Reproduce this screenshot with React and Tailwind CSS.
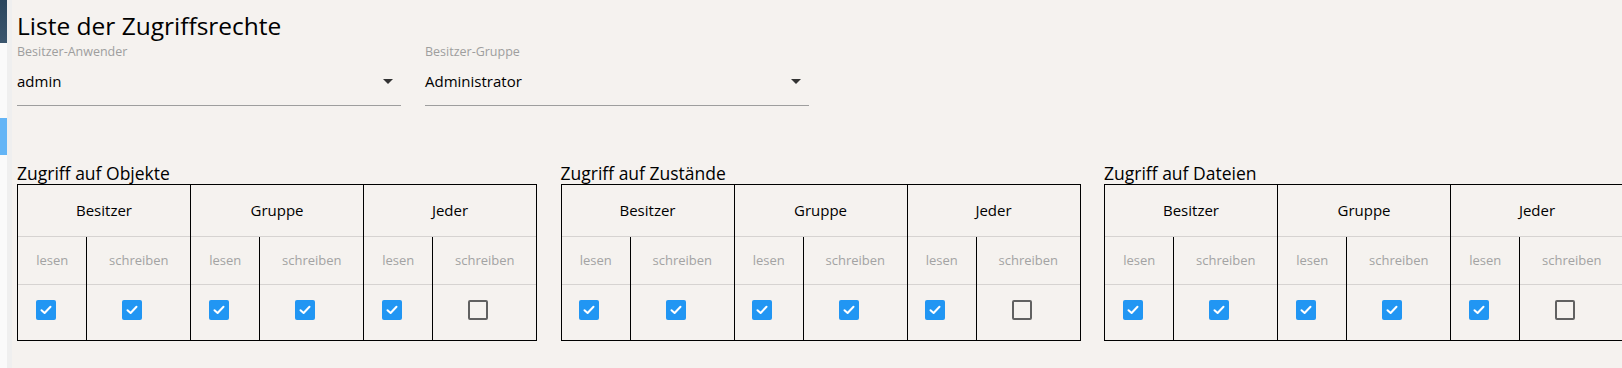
import React from 'react';

const font = { fontFamily: '"Open Sans", "Noto Sans", sans-serif' };

const Checkbox = ({ checked }) => {
  if (!checked) {
    return <span className="block w-[20px] h-[20px] rounded-[2px] border-[2.5px] border-[#616161]" />;
  }
  return (
    <span className="flex items-center justify-center w-[20px] h-[20px] rounded-[2px] bg-[#2196f3]">
      <svg width="14" height="14" viewBox="0 0 14 14">
        <path d="M2.5 7.2 L5.6 10 L11.5 3.8" fill="none" stroke="white" strokeWidth="2" strokeLinecap="round" strokeLinejoin="round" />
      </svg>
    </span>
  );
};

const Select = ({ label, value }) => (
  <div className="w-[384px]">
    <div className="text-[12.5px] leading-[16px] text-[#9e9e9e] mt-[2px]">{label}</div>
    <div className="flex items-center justify-between mt-[9px] pb-[12px] border-b border-[#9e9e9e]">
      <span className="text-[15px] leading-[24px] text-black">{value}</span>
      <svg width="10" height="5" viewBox="0 0 10 5" className="mr-[8px]">
        <path d="M0 0 L10 0 L5 5 Z" fill="#333" />
      </svg>
    </div>
  </div>
);

const Group = ({ name, read, write, first }) => (
  <div className={'flex-1 flex flex-col ' + (first ? '' : 'border-l border-black')}>
    <div className="h-[52px] flex items-center justify-center text-[15px] text-black border-b border-[#d6d3d1]">
      {name}
    </div>
    <div className="flex flex-1">
      <div className="w-[40.4%] flex flex-col border-r border-black">
        <div className="h-[48px] flex items-center justify-center text-[13px] text-[#a3a3a3] border-b border-[#d6d3d1]">
          lesen
        </div>
        <div className="flex-1 flex items-center justify-center pr-[13px] pb-[5px]">
          <Checkbox checked={read} />
        </div>
      </div>
      <div className="flex-1 flex flex-col">
        <div className="h-[48px] flex items-center justify-center text-[13px] text-[#a3a3a3] border-b border-[#d6d3d1]">
          schreiben
        </div>
        <div className="flex-1 flex items-center justify-center pr-[13px] pb-[5px]">
          <Checkbox checked={write} />
        </div>
      </div>
    </div>
  </div>
);

const AccessTable = ({ title }) => (
  <div className="w-[520px] shrink-0">
    <div className="text-[17.5px] leading-[22px] text-black">{title}</div>
    <div className="flex h-[157px] border border-black">
      <Group name="Besitzer" read write first />
      <Group name="Gruppe" read write />
      <Group name="Jeder" read write={false} />
    </div>
  </div>
);

export default function App() {
  return (
    <div className="flex w-[1622px] h-[368px] overflow-hidden bg-[#f5f2ef]" style={font}>
      <div className="w-[7px] shrink-0 flex flex-col bg-[#fafafa]">
        <div className="h-[43px] bg-gradient-to-b from-[#2a465e] to-[#3b566e]" />
        <div className="h-[75px]" />
        <div className="h-[37px] bg-[#64b5f6]" />
      </div>
      <div className="w-[5px] shrink-0 bg-[#efefef]" />
      <div className="flex-1 pl-[5px] min-w-0">
        <h1 className="text-[24.5px] leading-[32px] mt-[10px] text-black">Liste der Zugriffsrechte</h1>
        <div className="flex gap-[24px]">
          <Select label="Besitzer-Anwender" value="admin" />
          <Select label="Besitzer-Gruppe" value="Administrator" />
        </div>
        <div className="flex gap-[23.5px] mt-[56px]">
          <AccessTable title="Zugriff auf Objekte" />
          <AccessTable title="Zugriff auf Zustände" />
          <AccessTable title="Zugriff auf Dateien" />
        </div>
      </div>
    </div>
  );
}
